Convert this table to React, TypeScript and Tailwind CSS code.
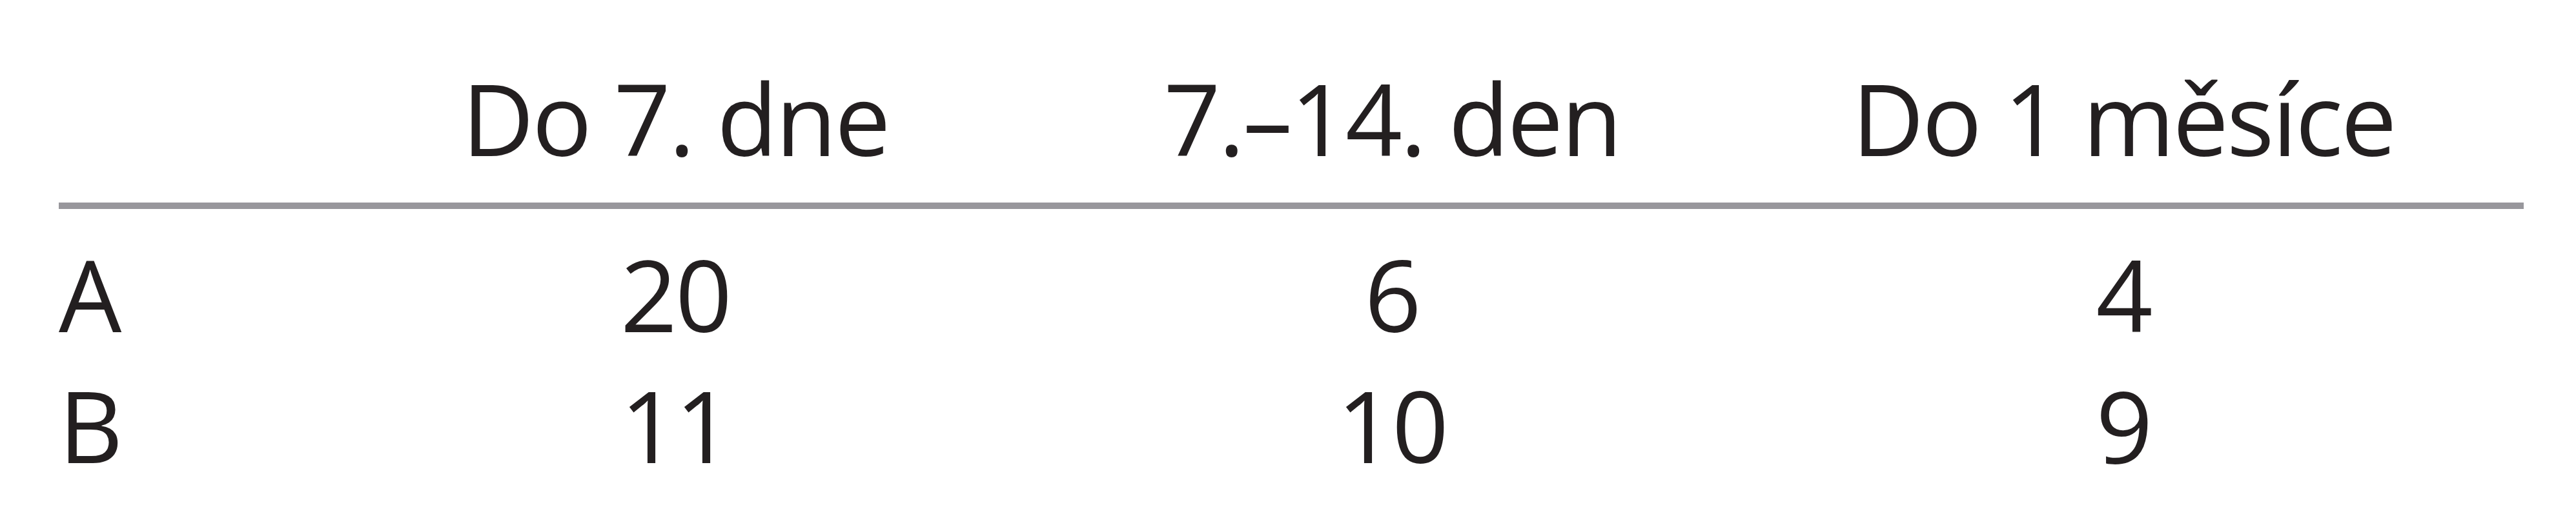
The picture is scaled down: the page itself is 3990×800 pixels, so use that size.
const headers = ["Do 7. dne", "7.–14. den", "Do 1 měsíce"];

const rows = [
  { label: "A", values: ["20", "6", "4"] },
  { label: "B", values: ["11", "10", "9"] },
];

export default function App() {
  return (
    <div className="w-[3990px] h-[800px] bg-white pt-[105px] pl-[91px] overflow-hidden">
      <div
        className="w-[3818px] text-[#231f20] text-[154px] tracking-[-3px]"
        style={{ fontFamily: '"Open Sans", "Liberation Sans", sans-serif' }}
      >
        <div className="grid grid-cols-[400px_1110px_1110px_1156px] leading-none pb-[55px] border-b-[10px] border-[#98979c]">
          <div></div>
          {headers.map((h) => (
            <div key={h} className="text-center whitespace-nowrap">
              {h}
            </div>
          ))}
        </div>

        <div className="pt-[30px]">
          {rows.map((row) => (
            <div
              key={row.label}
              className="grid grid-cols-[400px_1110px_1110px_1156px] leading-[203px]"
            >
              <div>{row.label}</div>
              {row.values.map((v, i) => (
                <div key={i} className="text-center">
                  {v}
                </div>
              ))}
            </div>
          ))}
        </div>
      </div>
    </div>
  );
}
